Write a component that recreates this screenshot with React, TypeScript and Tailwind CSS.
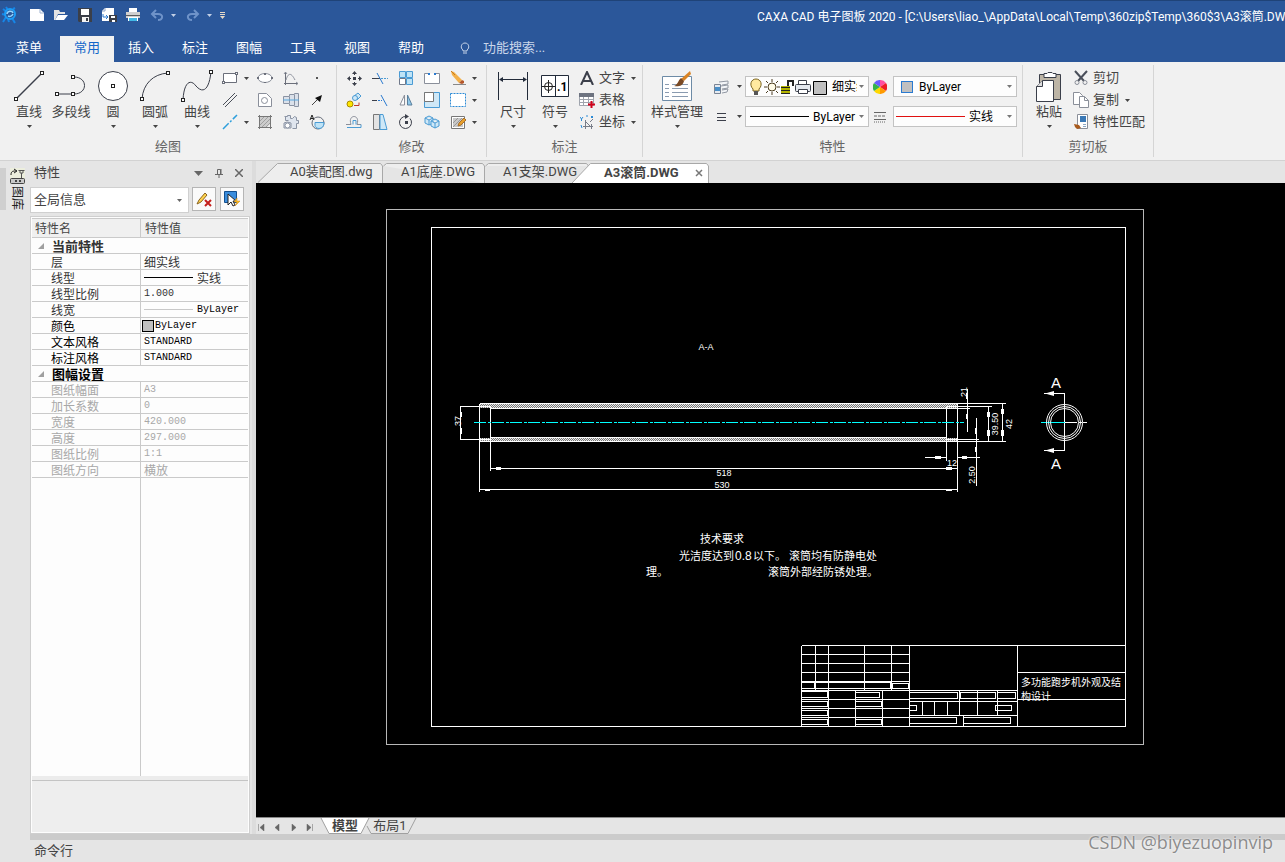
import React from 'react';

const UI_FONT = "font-['Roboto','Noto_Sans_CJK_SC',sans-serif]";
const GRID_FONT = "font-['Liberation_Mono','Noto_Sans_CJK_SC',monospace]";
const CJK_FONT = "font-['Noto_Sans_CJK_SC',sans-serif]";
const CAD_FONT = "font-['Liberation_Sans','Noto_Sans_CJK_SC',sans-serif]";

interface IconProps {
  w: number;
  h: number;
  children: React.ReactNode;
}

const Icon: React.FC<IconProps> = ({ w, h, children }) => (
  <svg width={w} height={h} viewBox={`0 0 ${w} ${h}`} fill="none" className="shrink-0" aria-hidden="true">
    {children}
  </svg>
);

const Caret = ({ color = '#444' }: { color?: string }) => (
  <Icon w={5} h={3}>
    <path d="M0 0h5L2.5 3z" fill={color} />
  </Icon>
);

/* ---------- title bar ---------- */

const AppLogo = () => (
  <Icon w={16} h={18}>
    <path d="M2 16l3-5M2 3l4 3M1 8l4 1M5 1l2 3M11 12l3 5M7 13l1 3M12 3l2-1" stroke="#1686e8" strokeWidth="2" />
    <circle cx="9" cy="8" r="5" stroke="#1c9cf5" strokeWidth="2" />
    <path d="M6 8c0-3 5-4 6-1M7 10c2 1 4 0 5-2" stroke="#8fd4ff" strokeWidth="1.5" />
  </Icon>
);

const quickTools = [
  {
    name: '新建',
    icon: <Icon w={16} h={14}><path d="M1 1h10l4 4v8H1z" fill="#fff" /><path d="M11 1v4h4" stroke="#9fb3d1" /></Icon>,
  },
  {
    name: '打开',
    icon: <Icon w={16} h={14}><path d="M1 2h5l1 2h5v2H5l-3 6H1z" fill="#e3e3e3" /><path d="M5 7h10l-4 5H2z" fill="#fff" /></Icon>,
  },
  {
    name: '保存',
    icon: (
      <Icon w={16} h={14}>
        <path d="M1 0h14v14H2l-1-1z" fill="#3b3f48" />
        <path d="M4 1h8v6H4z" fill="#fff" />
        <path d="M5 9h7v5H5z" fill="#f4f4f4" /><path d="M9 10h2v3H9z" fill="#3b3f48" />
      </Icon>
    ),
  },
  {
    name: '另存为',
    icon: (
      <Icon w={16} h={16}>
        <path d="M4 1h9v13H1V4z" fill="#fff" /><path d="M4 1v3H1" stroke="#8ea4c8" />
        <path d="M2 7v3h5M5 8l2 2-2 2" stroke="#2a7ad0" />
        <path d="M8 8h8v7H8z" fill="#3b3f48" /><path d="M10 9h4v2h-4zM11 13h3v2h-3z" fill="#fff" />
      </Icon>
    ),
  },
  {
    name: '打印',
    icon: (
      <Icon w={16} h={16}>
        <path d="M4 1h8v5H4z" fill="#fff" /><path d="M1 5h14v6H1z" fill="#d0d0d0" />
        <path d="M1 8h14v1H1z" fill="#5c5c5c" /><path d="M3 10h10v4H3z" fill="#fff" /><path d="M4 11h8v3H4z" fill="#41b8e6" />
      </Icon>
    ),
  },
];

const UndoIcon = ({ flip = false }: { flip?: boolean }) => (
  <Icon w={14} h={12}>
    <g transform={flip ? 'translate(14 0) scale(-1 1)' : undefined} stroke="#6f93c9" strokeWidth="2">
      <path d="M2 5h6c6 0 5 6 0 6M6 1L2 5l4 4" />
    </g>
  </Icon>
);

const menuTabs = ['常用', '插入', '标注', '图幅', '工具', '视图', '帮助'];

const TitleBar = () => (
  <header className="bg-[#2b579a] text-white">
    <div className="flex h-8 items-start border-t border-[#1f4378]">
      <div className="flex h-7 shrink-0 items-center pl-px">
        <span className="mr-2"><AppLogo /></span>
        {quickTools.map((tool) => (
          <button key={tool.name} type="button" aria-label={tool.name} className="flex w-6 justify-center">
            {tool.icon}
          </button>
        ))}
        <button type="button" aria-label="撤销" className="flex w-6 justify-center"><UndoIcon /></button>
        <button type="button" aria-label="撤销列表" className="w-3 pl-0.5"><Caret color="#c3d0e6" /></button>
        <button type="button" aria-label="重做" className="flex w-6 justify-center"><UndoIcon flip /></button>
        <button type="button" aria-label="重做列表" className="w-3 pl-0.5"><Caret color="#c3d0e6" /></button>
        <button type="button" aria-label="自定义快速访问" className="ml-0.5">
          <Icon w={7} h={7}><path d="M1 .5h5M1 2.5h5" stroke="#e6d9c8" /><path d="M1 4h5L3.5 7z" fill="#e6d9c8" /></Icon>
        </button>
      </div>
      <h1 className="ml-auto w-[528px] shrink-0 overflow-hidden text-xs leading-8 whitespace-nowrap">
        {'CAXA CAD 电子图板 2020 - [C:\\Users\\liao_\\AppData\\Local\\Temp\\360zip$Temp\\360$3\\A3滚筒.DWG'}
      </h1>
    </div>
    <nav className="flex pt-1 text-[13px]">
      <button type="button" className="h-6 w-[60px] pr-0.5">菜单</button>
      {menuTabs.map((tab) => (
        <button
          key={tab}
          type="button"
          className={tab === '常用' ? 'h-[26px] w-[54px] bg-[#f1f1f1] pb-0.5 text-[#1267c9]' : 'h-6 w-[54px]'}
        >
          {tab}
        </button>
      ))}
      <label className="ml-[22px] flex h-6 items-center gap-[13px] text-[#c9d6ea]">
        <Icon w={10} h={12}>
          <path d="M3 8C0 6 1 1 5 1s5 5 2 7v1H3z" stroke="#c9d6ea" /><path d="M3 11h4" stroke="#c9d6ea" />
        </Icon>
        <input className="w-24 bg-transparent placeholder:text-[#c9d6ea]" placeholder="功能搜索..." aria-label="功能搜索" />
      </label>
    </nav>
  </header>
);

/* ---------- ribbon ---------- */

const ink = '#3b3f4a';
const sky = '#4a9bd4';
const pale = '#cfe8f7';

const node = (x: number, y: number) => (
  <rect x={x - 1.5} y={y - 1.5} width="3" height="3" fill="#fff" stroke="#222" key={`${x}-${y}`} />
);

const drawTools = [
  {
    name: '直线',
    caret: true,
    icon: <Icon w={32} h={32}><path d="M3 29L29 3" stroke={ink} strokeWidth="1.5" />{node(3, 29)}{node(29, 3)}</Icon>,
  },
  {
    name: '多段线',
    caret: false,
    icon: (
      <Icon w={32} h={32}>
        <path d="M2 24h17c14 0 14-17 0-17" stroke={ink} />
        {node(2, 24)}{node(18, 24)}{node(18, 7)}
      </Icon>
    ),
  },
  {
    name: '圆',
    caret: true,
    icon: <Icon w={32} h={32}><circle cx="16" cy="16" r="14.5" fill="#fff" stroke={ink} />{node(16, 16)}</Icon>,
  },
  {
    name: '圆弧',
    caret: true,
    icon: <Icon w={32} h={32}><path d="M3 29C4 14 14 4 29 3" stroke={ink} />{node(3, 29)}{node(29, 3)}</Icon>,
  },
  {
    name: '曲线',
    caret: true,
    icon: (
      <Icon w={32} h={32}>
        <path d="M2 30C3 11 10 9 15 16c7 8 13 4 15-14" stroke={ink} />{node(2, 30)}{node(30, 2)}
      </Icon>
    ),
  },
];

interface SmallTool {
  name: string;
  caret?: boolean;
  icon: React.ReactNode;
}

const drawShapes: SmallTool[] = [
  {
    name: '矩形',
    caret: true,
    icon: (
      <Icon w={16} h={16}>
        <path d="M1.5 3.5h13v9h-13z" fill="#fff" stroke="#6b6f7a" />
        <path d="M0 11h3v3H0zM13 2h3v3h-3z" fill="#6b6f7a" /><path d="M1 12h1v1H1zM14 3h1v1h-1z" fill="#fff" />
      </Icon>
    ),
  },
  {
    name: '椭圆',
    icon: (
      <Icon w={16} h={16}>
        <ellipse cx="8" cy="8" rx="7" ry="4.5" fill="#fff" stroke="#8a8f9a" />
        <path d="M0 7h2v2H0zM14 7h2v2h-2zM7 3h2v2H7zM7 12h2v1H7z" fill="#6b6f7a" />
      </Icon>
    ),
  },
  {
    name: '公式曲线',
    icon: (
      <Icon w={16} h={16}>
        <path d="M2.5 2v13M1 13.5h14" stroke="#6b6f7a" /><path d="M3 10C5 3 8 2 12 10M1 4l1.5-2L4 4M13 12l2 1.5-2 1.5" stroke="#8a8f9a" />
      </Icon>
    ),
  },
  { name: '点', icon: <Icon w={16} h={16}><path d="M7 7h2v2H7z" fill="#555" /></Icon> },
  {
    name: '平行线',
    icon: <Icon w={16} h={16}><path d="M1 13L13 1M3 15L15 3" stroke="#4a4f5a" /></Icon>,
  },
  {
    name: '局部放大',
    icon: (
      <Icon w={16} h={16}>
        <path d="M1.5 1.5h8l5 5v8h-13z" stroke="#8a8f9a" fill="#fff" /><circle cx="7.5" cy="8.500" r="3" stroke="#8a8f9a" />
      </Icon>
    ),
  },
  {
    name: '孔轴',
    icon: (
      <Icon w={16} h={16}>
        <path d="M.5 4.5h6v-2h5v-1h4v13h-4v-1h-5v-2h-6z" fill="#dbe1ea" stroke="#8a93a3" />
        <path d="M6.500 5v6M11.500 3v10" stroke="#8a93a3" /><path d="M0 8h16" stroke="#5aa8dd" />
      </Icon>
    ),
  },
  {
    name: '箭头',
    icon: <Icon w={16} h={16}><path d="M3 13l6-6" stroke="#444" /><path d="M13 3l-2 7-5-4z" fill="#111" /></Icon>,
  },
  {
    name: '中心线',
    caret: true,
    icon: <Icon w={16} h={16}><path d="M1 15L15 1" stroke="#2e9fdc" strokeWidth="1.5" strokeDasharray="8 2 2 2" /></Icon>,
  },
  {
    name: '剖面线',
    icon: (
      <Icon w={16} h={16}>
        <path d="M3 3h10v7l-3 3H3z" fill="#cdcdcd" /><path d="M3 7l4-4M3 11l8-8M5 13l8-8M9 13l4-4" stroke="#a0a0a0" />
        <path d="M1 2.5h14M1 13.5h14M2.5 1v14M13.5 1v14" stroke="#777" />
      </Icon>
    ),
  },
  {
    name: '齿形',
    icon: (
      <Icon w={16} h={16}>
        <path d="M1.500 2.500h3v-1h3v3h2l2-2 2 1v3h2v3h-2v5h-4" stroke="#8a93a3" fill="#dfe5ee" />
        <path d="M2.500 2.500v4h3M1 14V9l3-1 4 1v5H1z" stroke="#8a93a3" fill="#dfe5ee" />
        <circle cx="4.500" cy="11.500" r="2.500" stroke="#8a93a3" fill="#fff" />
      </Icon>
    ),
  },
  {
    name: '块',
    icon: (
      <Icon w={16} h={16}>
        <circle cx="9" cy="9" r="6" stroke="#666c78" /><path d="M6 8.500h9c0 4-2 6-5 6s-4-2-4-3z" fill="#bfe3f6" stroke={sky} />
        <path d="M1 6l2-5 2 5M2 4.500h2" stroke="#222" />
      </Icon>
    ),
  },
];

const modifyTools: SmallTool[] = [
  {
    name: '平移',
    icon: (
      <Icon w={16} h={16}>
        <path d="M7 7h3v3H7zM8.500 1L6 4h5zM8.500 16L6 13h5zM1 8.500L4 6v5zM16 8.500L13 6v5z" fill={ink} />
        <path d="M8.500 3v2M8.500 12v2M3 8.500h2M12 8.500h2" stroke={ink} />
      </Icon>
    ),
  },
  {
    name: '裁剪',
    icon: (
      <Icon w={16} h={16}>
        <path d="M0 8.500h8" stroke={ink} /><path d="M9 8.500h7" stroke={sky} strokeDasharray="2 1" />
        <path d="M5 3l6 11" stroke="#2a7ad0" />
      </Icon>
    ),
  },
  {
    name: '阵列',
    icon: (
      <Icon w={16} h={16}>
        <path d="M1.500 1.500h6v6h-6zM8.500 1.500h6v6h-6zM8.500 8.500h6v6h-6z" fill="#bfe3f6" stroke={sky} />
        <path d="M1.500 8.500h6v6h-6z" fill="#fff" stroke="#70798a" />
      </Icon>
    ),
  },
  {
    name: '打断',
    icon: (
      <Icon w={16} h={16}>
        <path d="M5 3.500H.5v10h15v-10H11" stroke="#8a8f9a" fill="#fff" /><path d="M4 3h2v2H4zM10 3h2v2h-2z" fill="#2a7ad0" />
      </Icon>
    ),
  },
  {
    name: '删除',
    caret: true,
    icon: (
      <Icon w={16} h={16}>
        <path d="M1 1l3 1 8 8-3 3-7-8z" fill="#f2b04a" /><path d="M1 1l4 4" stroke="#c97c1c" />
        <path d="M9 13l3-3 2 1v2l-2 1z" fill="#b4562a" /><path d="M3 14.500h13" stroke="#888" />
      </Icon>
    ),
  },
  {
    name: '平移复制',
    icon: (
      <Icon w={16} h={16}>
        <path d="M8 4l4-3 3 3-4 4z" fill={pale} stroke={sky} /><circle cx="9" cy="6" r="2.500" fill={pale} stroke={sky} />
        <circle cx="4" cy="12" r="3" fill="#ffe500" stroke="#a88b00" /><path d="M8 13.500h5v-3" stroke="#c0392b" />
      </Icon>
    ),
  },
  {
    name: '延伸',
    icon: (
      <Icon w={16} h={16}>
        <path d="M0 8.500h5" stroke={ink} /><path d="M6 8.500h4" stroke="#2a7ad0" strokeDasharray="2 1" />
        <path d="M9 3l6 11" stroke="#2a7ad0" />
      </Icon>
    ),
  },
  {
    name: '镜像',
    icon: <Icon w={16} h={16}><path d="M6.500 3v10H2z" stroke="#8a8f9a" fill="#fff" /><path d="M9.500 3v10H14z" fill="#8fc8ea" stroke="#5a7f9c" /></Icon>,
  },
  {
    name: '缩放',
    icon: <Icon w={16} h={16}><path d="M.5.5h15v15H.5z" fill={pale} stroke={sky} /><path d="M.5.5h9v9h-9z" fill="#fff" stroke="#777" /></Icon>,
  },
  {
    name: '分解',
    caret: true,
    icon: <Icon w={16} h={16}><path d="M.5 1.500h15v13H.5z" fill="#fff" stroke="#2a8ad6" strokeDasharray="2 1" /></Icon>,
  },
  {
    name: '等距线',
    icon: (
      <Icon w={16} h={16}>
        <path d="M0 10.500h5c-2-6 1-8 3-8s5 2 3 8h4" stroke="#8a8f9a" /><path d="M1 13.500h14v-3M7 10.500V6.500h3v4" stroke={sky} />
      </Icon>
    ),
  },
  {
    name: '拉伸',
    icon: <Icon w={16} h={16}><path d="M1.500.5h6v15h-6z" fill="#e3e3e3" stroke="#777" /><path d="M8 .5h3l4 15H8z" fill={pale} stroke={sky} /></Icon>,
  },
  {
    name: '旋转',
    icon: (
      <Icon w={16} h={16}>
        <path d="M8 2.500a6 6 0 1 0 4 2" stroke={ink} /><path d="M7 0l4 2.500L7 5z" fill={ink} /><path d="M7 7h3v3H7z" fill={ink} />
      </Icon>
    ),
  },
  {
    name: '三维',
    icon: (
      <Icon w={16} h={16}>
        <path d="M1 4l4-2 4 2v5l-4 2-4-2zM1 4l4 2 4-2M5 6v5" stroke={sky} fill={pale} />
        <path d="M7 7l4-2 4 2v5l-4 2-4-2zM7 7l4 2 4-2M11 9v5" stroke={sky} fill={pale} />
      </Icon>
    ),
  },
  {
    name: '编辑填充',
    caret: true,
    icon: (
      <Icon w={16} h={16}>
        <path d="M1.500 2.500h13v12h-13z" fill="#fff" stroke="#777" /><path d="M3 4h10v9H3z" fill="#c8c8c8" />
        <path d="M3 9l5-5M3 13l9-9" stroke="#999" /><path d="M8 12l1-3 5-5 2 2-5 5z" fill="#e8a02c" stroke="#a8702c" />
      </Icon>
    ),
  },
];

const SmallButton = ({ tool, wide }: { tool: SmallTool; wide?: boolean }) => (
  <button
    type="button"
    aria-label={tool.name}
    className={`flex h-[22px] items-center pl-1 ${wide ? 'w-9 gap-1.5' : 'w-[26px]'}`}
  >
    {tool.icon}
    {tool.caret && <Caret />}
  </button>
);

const BigButton = ({ name, icon, caret = true }: { name: string; icon: React.ReactNode; caret?: boolean }) => (
  <button type="button" className="flex min-w-[42px] flex-col items-center pt-px leading-4 whitespace-nowrap">
    <span className="flex h-9 items-center">{icon}</span>
    <span>{name}</span>
    <span className="flex h-3 items-center">{caret && <Caret />}</span>
  </button>
);

const LabelButton = ({ name, icon, caret }: { name: string; icon: React.ReactNode; caret?: boolean }) => (
  <button type="button" className="flex h-[22px] items-center gap-1 whitespace-nowrap">
    <span className="flex w-4 justify-center">{icon}</span>
    <span>{name}</span>
    {caret && <span className="ml-0.5"><Caret /></span>}
  </button>
);

interface GroupProps {
  label: string;
  width: string;
  pad: string;
  children: React.ReactNode;
}

const Group: React.FC<GroupProps> = ({ label, width, pad, children }) => (
  <section className={`my-[3px] flex shrink-0 flex-col border-r border-[#d5d5d5] pt-0.5 ${width}`}>
    <div className={`flex h-[66px] ${pad}`}>{children}</div>
    <h2 className="mt-1.5 mb-0.5 text-center leading-4 text-[#666]">{label}</h2>
  </section>
);

const Combo = ({ label, value, prefix }: { label: string; value: string; prefix: React.ReactNode }) => (
  <div className="flex h-[21px] w-[124px] items-center border border-[#c3c3c3] bg-[#fdfdfd] pr-1 pl-1">
    {prefix}
    <select aria-label={label} className="ml-1 min-w-0 flex-1 appearance-none overflow-hidden bg-transparent text-xs leading-4 text-black">
      <option>{value}</option>
    </select>
    <span className="ml-0.5 flex"><Caret color="#777" /></span>
  </div>
);

const LayerStateIcons = () => (
  <Icon w={78} h={18}>
    <path d="M3 11C-1 7 1 1 6 1s7 6 3 10v2H3z" fill="#ffe9a0" stroke="#7a6320" /><path d="M4 13h4v4H4z" fill="#555" />
    <circle cx="22" cy="9" r="4" fill="#fffbe8" stroke="#4a3b20" />
    <path d="M22 1v3M22 14v3M14 9h3M27 9h3M16 3l2 2M26 13l2 2M28 3l-2 2M18 13l-2 2" stroke="#4a3b20" />
    <path d="M31 8h9v8h-9z" fill="#b4b400" /><path d="M31 9.500h9M31 12.500h9M31 15.500h9" stroke="#222" />
    <path d="M38 8V3h5v5" stroke="#222" strokeWidth="2" />
    <path d="M48.500 6V2.500h8V6" fill="#fff" stroke={ink} /><rect x="45.500" y="6.500" width="15" height="7" rx="1" fill="#e4e8ee" stroke={ink} />
    <path d="M48.500 11.500h9v4h-9z" fill="#fff" stroke={ink} />
    <path d="M63.500 3.500h13v13h-13z" fill="#c0c0c0" stroke="#000" />
  </Icon>
);

const ColorWheel = () => (
  <Icon w={14} h={14}>
    <path d="M7 7V0a7 7 0 0 1 6 3z" fill="#ff4fa0" /><path d="M7 7l6-4a7 7 0 0 1 0 8z" fill="#ee1c25" />
    <path d="M7 7l6 4a7 7 0 0 1-6 3z" fill="#ff9a00" /><path d="M7 7v7a7 7 0 0 1-6-3z" fill="#ffd800" />
    <path d="M7 7l-6 4a7 7 0 0 1 0-8z" fill="#35b44a" /><path d="M7 7L1 3a7 7 0 0 1 6-3z" fill="#6a5cff" />
  </Icon>
);

const Ribbon = () => (
  <div className="flex overflow-hidden border-b border-[#d2d2d2] bg-[#f1f1f1] text-[13px] text-[#444]">
    <Group label="绘图" width="w-[337px]" pad="pl-2">
      {drawTools.map((tool) => <BigButton key={tool.name} {...tool} />)}
      <div className="grid grid-cols-[35px_26px_26px_26px]">
        {drawShapes.map((tool, i) => <SmallButton key={tool.name} tool={tool} wide={i % 4 === 0} />)}
      </div>
    </Group>

    <Group label="修改" width="w-[150px]" pad="pl-[5px]">
      <div className="grid grid-cols-[26px_26px_26px_26px_36px]">
        {modifyTools.map((tool, i) => <SmallButton key={tool.name} tool={tool} wide={i % 5 === 4} />)}
      </div>
    </Group>

    <Group label="标注" width="w-[156px]" pad="pl-[5px]">
      <BigButton
        name="尺寸"
        icon={
          <Icon w={30} h={30}>
            <path d="M.5 1v28M29.500 1v28M2 8.500h26" stroke="#222b3a" /><path d="M1 8.500L5 6v5zM29 8.500L25 6v5z" fill="#222b3a" />
          </Icon>
        }
      />
      <BigButton
        name="符号"
        icon={
          <Icon w={28} h={22}>
            <path d="M.5.5h27v21H.5zM14.500 0v22" fill="#fff" stroke="#222b3a" />
            <circle cx="7.500" cy="11.500" r="4" stroke="#222" /><path d="M7.500 5v13M1 11.500h13" stroke="#222" />
            <text x="16" y="16" fontSize="12" fontWeight="bold" fill="#000">.1</text>
          </Icon>
        }
      />
      <div className="ml-[3px] flex flex-col">
        <LabelButton name="文字" caret icon={<Icon w={14} h={14}><path d="M1 14L7 1l6 13M3 10h8" stroke={ink} strokeWidth="2" /></Icon>} />
        <LabelButton
          name="表格"
          icon={
            <Icon w={16} h={16}>
              <path d="M.5 1.500h14v12H.5zM0 7.500h15M0 10.500h15M4.500 2v12M9.500 2v12" stroke="#a0a5ae" fill="#fff" />
              <path d="M0 1h15v4H0z" fill="#6d7380" /><path d="M12.500 9v7M9 12.500h7" stroke="#d0021b" strokeWidth="2" />
            </Icon>
          }
        />
        <LabelButton
          name="坐标"
          caret
          icon={
            <Icon w={14} h={14}>
              <path d="M5.500 5v9M3 11.500h10M10 7l3-3M6 7l4 4M11.500 9v5" stroke="#777c88" />
              <path d="M0 2l1.500 2L3 2M1.500 4v2M1 10l1 3M6 1h2M11 1l2 2M13 1l-2 2" stroke="#2a8ad6" />
            </Icon>
          }
        />
      </div>
    </Group>

    <Group label="特性" width="w-[380px]" pad="pl-2">
      <BigButton
        name="样式管理"
        icon={
          <Icon w={32} h={32}>
            <path d="M1.500 6.500h29v24h-29z" fill="#fff" stroke="#6d8ba6" />
            <path d="M4 14.500h4M11 14.500h16M4 18.500h4M11 18.500h16M4 22.500h4M11 22.500h16M4 26.500h4M11 26.500h16" stroke="#8a9bb0" />
            <path d="M29 1l1 3-7 7-3-2z" fill="#d98324" /><path d="M20 8l3 3c-1 5-6 6-10 5 4-1 4-6 7-8z" fill="#7a4a25" />
          </Icon>
        }
      />
      <div className="ml-2.5 flex flex-col gap-[9px] pt-[9px]">
        <div className="flex items-center">
          <button type="button" aria-label="图层" className="flex w-8 items-center gap-2">
            <Icon w={16} h={16}>
              <path d="M6 3l9-1v3l-6 1M8 7l7-1v3l-6 1M9 11l6-1-1 3-5 1" stroke="#9298a3" fill="#f3f5f8" />
              <path d="M1.500 5.500h6v9h-6z" fill="#e5eaf1" stroke="#7b8594" /><path d="M2 8h5v4H2z" fill="#4a8fc8" />
            </Icon>
            <Caret />
          </button>
          <Combo label="当前图层" value="细实线" prefix={<LayerStateIcons />} />
          <span className="mr-[6px] ml-1"><ColorWheel /></span>
          <Combo
            label="颜色"
            value="ByLayer"
            prefix={<span className="mr-0.5 ml-[3px] size-3 shrink-0 border border-[#2a7ad0] bg-[#c0c0c0]" />}
          />
        </div>
        <div className="flex items-center">
          <button type="button" aria-label="线宽设置" className="flex w-8 items-center gap-2">
            <Icon w={16} h={16}><path d="M4 4.500h9M4 8.500h9M4 11.500h9" stroke={ink} /></Icon>
            <Caret />
          </button>
          <Combo label="线宽" value="ByLayer" prefix={<span className="w-[59px] shrink-0 border-t border-black" />} />
          <span className="mr-[6px] ml-1">
            <Icon w={14} h={12}>
              <path d="M1 1.500h12M1 8.500h12" stroke="#666" /><path d="M1 5h12" stroke="#666" strokeDasharray="3 1" />
              <path d="M1 11h12" stroke="#666" strokeDasharray="1 1" />
            </Icon>
          </span>
          <Combo label="线型" value="实线" prefix={<span className="-ml-0.5 w-[69px] shrink-0 border-t border-[#e01010]" />} />
        </div>
      </div>
    </Group>

    <Group label="剪切板" width="w-[131px]" pad="pl-[5px]">
      <BigButton
        name="粘贴"
        icon={
          <Icon w={28} h={32}>
            <path d="M4.500 4.500h21v25h-21z" fill="#bdb5a6" stroke={ink} /><path d="M9 3.500h3l1-1h4l1 1h3v4H9z" fill="#fff" stroke={ink} />
            <path d="M7.500 10.500h11v21h-17v-15z" fill="#fff" stroke={ink} /><path d="M7.500 10.500v6h-6" stroke={ink} fill="#ddd" />
          </Icon>
        }
      />
      <div className="ml-[3px] flex flex-col">
        <LabelButton
          name="剪切"
          icon={
            <Icon w={16} h={16}>
              <path d="M2 1l9 10M14 1L5 11" stroke="#4a4f5a" strokeWidth="2" />
              <circle cx="4" cy="12.500" r="2" stroke="#8a8f99" /><circle cx="12" cy="12.500" r="2" stroke="#8a8f99" />
            </Icon>
          }
        />
        <LabelButton
          name="复制"
          caret
          icon={
            <Icon w={16} h={16}>
              <path d="M.5.5h6l3 3v9h-9z" fill="#fff" stroke="#8a8f99" /><path d="M6.500 4.500h5l4 4v7h-9z" fill="#fff" stroke="#8a8f99" />
              <path d="M11.500 4.500v4h4" stroke="#8a8f99" />
            </Icon>
          }
        />
        <LabelButton
          name="特性匹配"
          icon={
            <Icon w={16} h={16}>
              <path d="M4.500.5h10v14h-10z" fill="#fff" stroke="#8a8f99" /><path d="M7 2h6v6H7z" fill="#3a78b5" />
              <path d="M1 10l5 1 2 3-4 1-2-2z" fill="#a85a1c" /><path d="M10 10.500h3M10 12.500h3" stroke="#8aa6c4" />
            </Icon>
          }
        />
      </div>
    </Group>
  </div>
);

/* ---------- property panel ---------- */

interface PropertyRow {
  name: string;
  value?: React.ReactNode;
  tone?: string;
}

const currentRows: PropertyRow[] = [
  { name: '层', value: <span className={`block text-[12px] ${CJK_FONT}`}>细实线</span> },
  {
    name: '线型',
    value: (
      <span className={`flex items-center gap-1 text-[12px] ${CJK_FONT}`}>
        <i className="w-[49px] border-t border-black" />
        实线
      </span>
    ),
  },
  { name: '线型比例', value: '1.000' },
  {
    name: '线宽',
    value: (
      <span className="flex items-center gap-1 text-black">
        <i className="w-[49px] border-t border-[#c8c8c8]" />
        ByLayer
      </span>
    ),
  },
  {
    name: '颜色',
    tone: 'text-black',
    value: (
      <span className="-ml-0.5 flex items-center gap-px">
        <i className="size-3 border border-black bg-[#c0c0c0]" />
        ByLayer
      </span>
    ),
  },
  { name: '文本风格', value: 'STANDARD', tone: 'text-black' },
  { name: '标注风格', value: 'STANDARD', tone: 'text-black' },
];

const sheetRows: PropertyRow[] = [
  { name: '图纸幅面', value: 'A3' },
  { name: '加长系数', value: '0' },
  { name: '宽度', value: '420.000' },
  { name: '高度', value: '297.000' },
  { name: '图纸比例', value: '1:1' },
  { name: '图纸方向', value: <span className={`block text-[12px] ${CJK_FONT}`}>横放</span> },
];

const GroupRow = ({ name, tone }: { name: string; tone: string }) => (
  <tr>
    <th colSpan={2} className={`h-4 border-b border-[#cacaca] p-0 text-left text-[13px] leading-[15px] font-bold ${tone} ${CJK_FONT}`}>
      <span className="flex items-center gap-2 pl-1.5">
        <Icon w={6} h={6}><path d="M6 0v6H0z" fill="#a0a0a0" /></Icon>
        {name}
      </span>
    </th>
  </tr>
);

const Row = ({ row, tone }: { row: PropertyRow; tone: string }) => (
  <tr className={row.tone ?? tone}>
    <td className={`h-4 border-r border-b border-[#cacaca] p-0 pl-[19px] text-[12px] leading-[15px] ${CJK_FONT}`}>{row.name}</td>
    <td className={`h-4 border-b border-[#cacaca] p-0 pl-[3px] text-[10px] leading-[15px] ${GRID_FONT}`}>{row.value}</td>
  </tr>
);

const PropertyPanel = () => (
  <aside className="flex w-[220px] shrink-0 flex-col text-[#444]">
    <div className="flex h-[26px] items-center gap-3 pr-[7px] pb-0.5 pl-1 text-[13px]">
      <h2 className="mr-auto">特性</h2>
      <button type="button" aria-label="选项"><Icon w={9} h={5}><path d="M0 0h9L4.500 5z" fill="#666" /></Icon></button>
      <button type="button" aria-label="固定">
        <Icon w={8} h={9}><path d="M2.500 5V.5h3V5M6 0v5M0 5.500h8M4 6v3" stroke="#666" /></Icon>
      </button>
      <button type="button" aria-label="关闭"><Icon w={8} h={8}><path d="M0 0l8 8M8 0L0 8" stroke="#666" strokeWidth="1.5" /></Icon></button>
    </div>
    <div className="flex items-start gap-1 pr-1.5">
      <div className="-mr-px flex h-[26px] flex-1 items-center border border-[#d0d0d0] bg-white pr-1.5 pl-[3px]">
        <select aria-label="选择对象" className="min-w-0 flex-1 appearance-none bg-transparent text-[13px] leading-5">
          <option>全局信息</option>
        </select>
        <Caret color="#666" />
      </div>
      <button type="button" aria-label="清除选择" className="flex size-6 items-center justify-center border border-[#b5b5b5] bg-[#fafafa]">
        <Icon w={16} h={16}>
          <path d="M1 13l2-4 6-7 2 2-6 7z" fill="#ffd34d" stroke="#8a6420" /><path d="M9 9l6 6M15 9l-6 6" stroke="#c4201d" strokeWidth="2" />
        </Icon>
      </button>
      <button type="button" aria-label="快速选择" className="flex size-6 items-center justify-center border border-[#b5b5b5] bg-[#fafafa]">
        <Icon w={16} h={16}>
          <path d="M.5.5h12v11H.5z" fill="#3a8ddd" stroke="#14508f" /><path d="M4 3v11l3-3 2 4 2-1-2-4h3z" fill="#fff" stroke="#222" />
          <path d="M13 7l-3 4h3l-2 4 5-5h-3z" fill="#ffc21a" stroke="#c97c1c" strokeWidth=".5" />
        </Icon>
      </button>
    </div>
    <div className="mt-[3px] flex min-h-0 flex-1 flex-col border border-[#cfcfcf] bg-[#fdfdfd] p-px">
      <table className="w-full table-fixed border-separate border-spacing-0">
        <colgroup>
          <col className="w-[109px]" />
          <col />
        </colgroup>
        <thead>
          <tr className={`bg-[#f0f0f0] text-left text-[12px] leading-[18px] ${CJK_FONT}`}>
            <th className="h-5 border-t border-r border-b border-[#cacaca] p-0 pl-[3px] font-normal">特性名</th>
            <th className="h-5 border-t border-b border-[#cacaca] p-0 pl-1 font-normal">特性值</th>
          </tr>
        </thead>
        <tbody>
          <GroupRow name="当前特性" tone="text-[#333]" />
          {currentRows.map((row) => <Row key={row.name} row={row} tone="text-[#333]" />)}
          <GroupRow name="图幅设置" tone="text-black" />
          {sheetRows.map((row) => <Row key={row.name} row={row} tone="text-[#a8a8a8]" />)}
        </tbody>
      </table>
      <div className="w-[109px] flex-1 border-r border-[#cacaca]" />
      <div className="h-1 bg-[#ececec]" />
      <div className="h-[52px] border-t border-[#c4c4c4] bg-[#eee]" />
    </div>
  </aside>
);

const SideStrip = () => (
  <div className="flex w-[30px] shrink-0 items-start gap-[3px] pt-[7px]">
    <div className="h-[42px] w-1.5 bg-[#cfcfcf]" />
    <button type="button" className="flex flex-col items-center text-[#222]">
      <Icon w={15} h={16}>
        <path d="M0 0h15v16H0z" fill="#eceedd" />
        <path d="M1 7c0-4 2-4 5-4M4 1l3 2-3 2" stroke="#222" /><path d="M8.500 2.500h6M10 2v3h3V2M11.500 5v5" stroke="#555" />
        <rect x=".5" y="10.500" width="14" height="5" rx="1" fill="#c9c9c9" stroke="#444" /><path d="M5 12h2v2H5zM9 12h2v2H9z" fill="#444" />
      </Icon>
      <span className="mt-0.5 text-xs leading-4 [text-orientation:sideways] [writing-mode:vertical-rl]">图库</span>
    </button>
  </div>
);

/* ---------- document area ---------- */

const docTabs = [
  { name: 'A0装配图.dwg', box: 'w-[126px] pl-[33px]', path: 'M1 20.500L20.500 1.500H123.500L125.500 4V21', w: 126 },
  { name: 'A1底座.DWG', box: 'w-[102px] pl-[18px]', path: 'M.5 4L3.500 1.500H99.500L101.500 4V21', w: 102 },
  { name: 'A1支架.DWG', box: 'w-[104px] pl-[18px]', path: 'M.5 4L3.500 1.500H101.500L103.500 4', w: 104 },
];

const DocTabs = () => (
  <div className="flex h-[22px] shrink-0 items-end overflow-hidden bg-[#e5e5e5] pl-px text-[13px] text-[#444]">
    {docTabs.map((tab) => (
      <button key={tab.name} type="button" className="grid shrink-0 text-left whitespace-nowrap">
        <span className="col-start-1 row-start-1">
          <Icon w={tab.w} h={21}><path d={tab.path} fill="#eee" stroke="#a8a8a8" /></Icon>
        </span>
        <span className={`col-start-1 row-start-1 leading-5 ${tab.box}`}>{tab.name}</span>
      </button>
    ))}
    <div className="-ml-[17px] grid shrink-0 font-bold whitespace-nowrap">
      <span className="col-start-1 row-start-1">
        <Icon w={137} h={21}><path d="M0 21L18.500 1.500H134.500L136.500 4V21" fill="#fff" stroke="#a8a8a8" /></Icon>
      </span>
      <span className="col-start-1 row-start-1 flex items-center justify-between pr-1.5 pl-8 leading-5">
        <button type="button">A3滚筒.DWG</button>
        <button type="button" aria-label="关闭图纸"><Icon w={8} h={8}><path d="M1 1l6 6M7 1L1 7" stroke="#777" strokeWidth="1.5" /></Icon></button>
      </span>
    </div>
  </div>
);

const titleBlockLines = [
  // revision table
  'M801 645H1125M801 654H909M801 663H909M801 672H909M801 681H909M801 690H1017',
  'M801 645V726M815 645V690M828 645V726M864 645V690M891 645V690M909 645V726M1017 645V726',
  // signatures
  'M801 699H909M801 708H909M801 717H909M855 690V726M882 690V726',
  // stage, weight and scale
  'M909 701H1017M909 715H1017M922 701V715M934 701V715M947 701V715M959 690V715M977 690V715M997 690V715M963 715V726',
  // drawing name
  'M1017 672H1125M1017 699H1125',
];

// x, y, width, height
const titleBlockCells = [
  [801, 682, 13, 6], [815, 682, 13, 6], [828, 682, 62, 6], [892, 683, 16, 5],
  [801, 691, 26, 6], [801, 701, 26, 5], [801, 710, 26, 5], [801, 719, 26, 5],
  [855, 692, 24, 5], [855, 701, 26, 5], [855, 719, 26, 5],
  [909, 692, 48, 6], [960, 692, 35, 6], [997, 692, 18, 6],
  [909, 705, 7, 5], [995, 705, 16, 5], [909, 717, 47, 6], [963, 717, 47, 6],
];

// x, y, width, height
const arrowHeads = [
  [460, 412, 2, 5], [460, 428, 2, 6], [496, 467, 5, 3], [946, 467, 6, 3], [485, 490, 5, 1], [946, 490, 6, 1],
  [966, 393, 2, 6], [966, 414, 2, 5], [975, 428, 2, 6], [975, 447, 2, 5],
  [987, 412, 3, 5], [987, 430, 3, 6], [1001, 409, 3, 5], [1001, 430, 3, 6],
  [935, 456, 6, 3], [962, 456, 5, 3],
];

const dimensions = [
  { text: '37', x: 461, y: 421 },
  { text: '21', x: 967, y: 392 },
  { text: '39.50', x: 998, y: 424 },
  { text: '42', x: 1012, y: 424 },
  { text: '2.50', x: 975, y: 475 },
];

const Drawing = () => (
  <svg viewBox="256 183 1029 634" preserveAspectRatio="xMinYMin" className={`min-h-0 w-full flex-1 bg-black ${CAD_FONT}`} role="img" aria-label="A3滚筒">
    <defs>
      <pattern id="hatch" width="2" height="2" patternUnits="userSpaceOnUse">
        <rect width="2" height="2" fill="#777" />
        <path d="M0 0h1v1H0zM1 1h1v1H1z" fill="#e8e8e8" />
      </pattern>
    </defs>

    {/* tube walls */}
    <path d="M480 404H957V408H480zM480 438H957V441H480z" fill="url(#hatch)" shapeRendering="crispEdges" />

    <g transform="translate(.5 .5)" fill="none" stroke="#fff" shapeRendering="crispEdges">
      <path d="M386 209H1143V744H386z" stroke="#b8b8b8" />
      <path d="M431 227H1125V726H431z" />

      <path d="M479 403H1005M490 408H969M459 406H490M946 406H991M490 437H946M459 439H490M946 439H978M479 441H1005" />
      <path d="M479 403V491M490 406V470M946 406V460M957 403V491" />
      <path d="M473 422H963" stroke="#00ffff" strokeDasharray="12 2 3 1" />

      {/* dimension lines */}
      <path d="M460 406V439M490 468H957M479 489H957M967 388V431M976 417V485M988 406V441M1002 403V441M924 457H946M957 457H979" />

      {/* section view */}
      <path d="M1064 393V450M1043 393H1064M1043 450H1064" />
      <path d="M1040 422H1064" stroke="#00ffff" />
      <path d="M1064 422H1086" strokeDasharray="12 2 3 1" />

      {titleBlockLines.map((d) => <path key={d} d={d} />)}
      {titleBlockCells.map(([x, y, w, h]) => <rect key={`${x}-${y}`} x={x} y={y} width={w} height={h} />)}
    </g>

    <g fill="none" stroke="#fff">
      <circle cx="1064.500" cy="422.500" r="18" />
      <circle cx="1064.500" cy="422.500" r="16" />
      <circle cx="1064.500" cy="422.500" r="14" />
    </g>

    <g fill="#fff">
      {arrowHeads.map(([x, y, w, h]) => <rect key={`${x}-${y}`} x={x} y={y} width={w} height={h} />)}
      <path d="M1045 393.500l9-2.500v5zM1045 450.500l9-2.500v5z" />
    </g>

    <g fill="#fff" fontSize="9" textAnchor="middle">
      <text x="706" y="350">A-A</text>
      <text x="724" y="476">518</text>
      <text x="722" y="488">530</text>
      <text x="952" y="466">12</text>
      {dimensions.map((d) => (
        <text key={d.text} transform={`translate(${d.x} ${d.y}) rotate(-90)`}>{d.text}</text>
      ))}
    </g>
    <g fill="#fff" fontSize="15" textAnchor="middle">
      <text x="1056" y="388">A</text>
      <text x="1056" y="469">A</text>
    </g>

    <g fill="#fff" fontSize="11">
      <text x="700" y="543">技术要求</text>
      <text x="679" y="560">光洁度达到</text>
      <text x="735" y="560" fontSize="12">0.8</text>
      <text x="753" y="560">以下。</text>
      <text x="789" y="560">滚筒均有防静电处</text>
      <text x="646" y="576">理。</text>
      <text x="768" y="576">滚筒外部经防锈处理。</text>
    </g>
    <g fill="#fff" fontSize="10">
      <text x="1021" y="686">多功能跑步机外观及结</text>
      <text x="1021" y="700">构设计</text>
    </g>
  </svg>
);

const pageButtons = [
  { name: '第一页', d: 'M.5 0v7M6 0v7L2 3.500z' },
  { name: '上一页', d: 'M5 0v7L1 3.500z' },
  { name: '下一页', d: 'M2 0v7l4-3.500z' },
  { name: '最后一页', d: 'M6.500 0v7M1 0v7l4-3.500z' },
];

const LayoutTabs = () => (
  <div className="flex h-[17px] shrink-0 items-start overflow-hidden border-t border-[#888] text-[13px] leading-[15px] text-[#444]">
    {pageButtons.map((b) => (
      <button key={b.name} type="button" aria-label={b.name} className="flex h-4 w-4 items-center justify-center pt-0.5 pr-1">
        <Icon w={8} h={7}><path d={b.d} fill="#666" stroke="#666" strokeWidth=".5" /></Icon>
      </button>
    ))}
    <button type="button" className="grid justify-items-center font-bold">
      <span className="col-start-1 row-start-1">
        <Icon w={50} h={16}><path d="M.5-1L9 15.500H41L49.500-1" fill="#fff" stroke="#a0a0a0" /></Icon>
      </span>
      <span className="col-start-1 row-start-1">模型</span>
    </button>
    <button type="button" className="-ml-1 grid justify-items-center">
      <span className="col-start-1 row-start-1">
        <Icon w={52} h={16}><path d="M1 8l4 7.500H42L50.500-1" stroke="#a0a0a0" /></Icon>
      </span>
      <span className="col-start-1 row-start-1 pr-1">布局1</span>
    </button>
  </div>
);

const App = () => (
  <div className={`relative flex h-screen flex-col overflow-hidden bg-[#e5e5e5] ${UI_FONT}`}>
    <TitleBar />
    <Ribbon />
    <div className="flex min-h-0 flex-1">
      <SideStrip />
      <PropertyPanel />
      <div className="ml-0.5 w-1 shrink-0 bg-[#dcdcdc]" />
      <main className="flex min-w-0 flex-1 flex-col">
        <DocTabs />
        <Drawing />
        <LayoutTabs />
      </main>
    </div>
    <div className="ml-[30px] h-1.5 shrink-0 bg-[#cbcbcb]" />
    <footer className="h-[22px] shrink-0 pl-[34px] text-[13px] leading-[22px] text-[#444]">命令行</footer>
    <p className="absolute right-3 bottom-1.5 font-['Open_Sans',sans-serif] text-[18px] leading-7 text-[#8c8c8c] [text-shadow:0_0_2px_#fff]">
      CSDN @biyezuopinvip
    </p>
  </div>
);

export default App;
